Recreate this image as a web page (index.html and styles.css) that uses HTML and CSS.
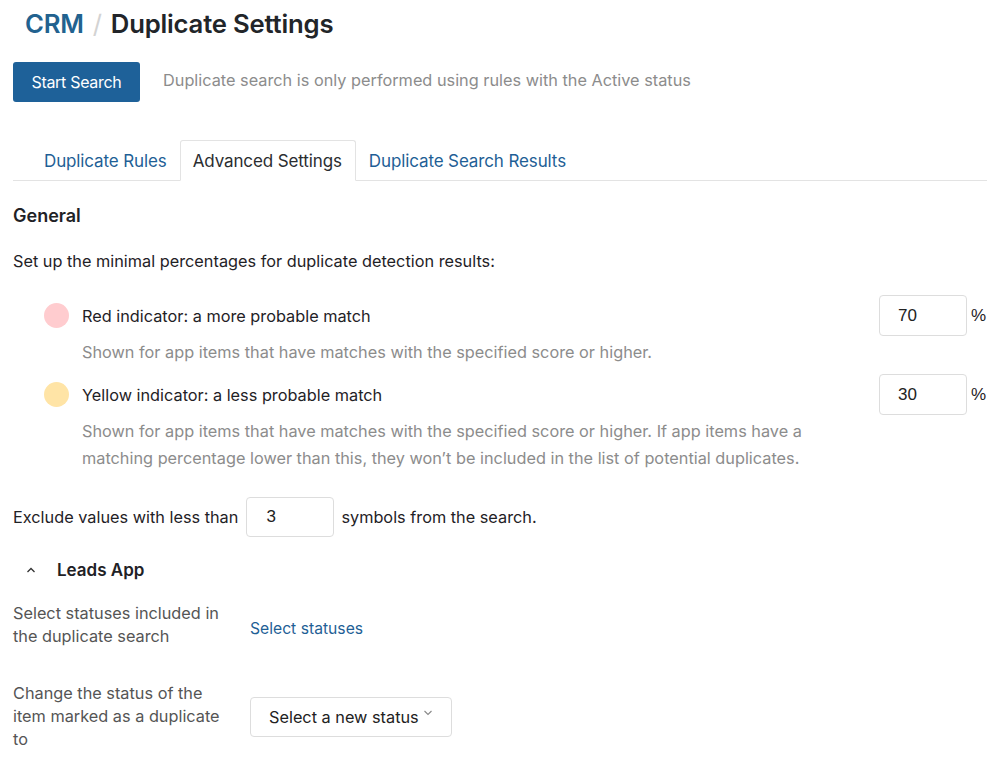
FILE: index.html
```html
<!DOCTYPE html>
<html>
<head>
<meta charset="utf-8">
<link rel="stylesheet" href="styles.css">
</head>
<body>
<div class="page">
  <h1 class="title"><span class="crumb">CRM</span><span class="sep">/</span><span>Duplicate Settings</span></h1>
  <div class="toolbar">
    <button class="btn-primary">Start Search</button>
    <span class="hint">Duplicate search is only performed using rules with the Active status</span>
  </div>
  <div class="tabs">
    <div class="tab">Duplicate Rules</div>
    <div class="tab active">Advanced Settings</div>
    <div class="tab">Duplicate Search Results</div>
  </div>
  <h2 class="section">General</h2>
  <p class="intro">Set up the minimal percentages for duplicate detection results:</p>
  <div class="indicator">
    <div class="ind-head">
      <span class="dot red"></span>
      <span class="ind-title">Red indicator: a more probable match</span>
      <span class="pct"><span class="box">70</span><span class="unit">%</span></span>
    </div>
    <p class="ind-desc">Shown for app items that have matches with the specified score or higher.</p>
  </div>
  <div class="indicator">
    <div class="ind-head">
      <span class="dot yellow"></span>
      <span class="ind-title">Yellow indicator: a less probable match</span>
      <span class="pct"><span class="box">30</span><span class="unit">%</span></span>
    </div>
    <p class="ind-desc">Shown for app items that have matches with the specified score or higher. If app items have a matching percentage lower than this, they won’t be included in the list of potential duplicates.</p>
  </div>
  <div class="exclude">
    <span>Exclude values with less than</span>
    <span class="box small">3</span>
    <span>symbols from the search.</span>
  </div>
  <div class="app-head">
    <svg class="chev" width="10" height="6" viewBox="0 0 10 6"><path d="M1.5 5 L5 1.5 L8.5 5" fill="none" stroke="#333" stroke-width="1.3"/></svg>
    <span>Leads App</span>
  </div>
  <div class="field first">
    <div class="label">Select statuses included in the duplicate search</div>
    <div class="value"><a class="link">Select statuses</a></div>
  </div>
  <div class="field second">
    <div class="label">Change the status of the item marked as a duplicate to</div>
    <div class="value">
      <div class="select"><span>Select a new status</span>
        <svg width="10" height="6" viewBox="0 0 10 6"><path d="M1.5 1 L5 4.5 L8.5 1" fill="none" stroke="#888" stroke-width="1.1"/></svg>
      </div>
    </div>
  </div>
</div>
</body>
</html>
```

FILE: styles.css
```css
* { box-sizing: border-box; }
html, body { margin: 0; padding: 0; background: #fff; }
body { font-family: Inter, "Noto Sans", sans-serif; color: #1f2226; font-size: 16.3px; }
.page { padding: 0 16px 0 13px; width: 1003px; }
.title { margin: 0; padding: 7px 0 0 12px; height: 50px; font-size: 25.7px; font-weight: 600; line-height: 34px; display: flex; letter-spacing: -0.2px; color: #222529; }
.crumb { color: #22628f; }
.sep { color: #d3d3d3; font-weight: 400; margin: 0 9px; }
.toolbar { display: flex; align-items: center; gap: 23px; margin-top: 12px; }
.btn-primary { background: #1e6199; color: #fff; border: 0; border-radius: 3px; width: 127px; height: 40px; font-family: Inter, sans-serif; font-size: 16px; letter-spacing: -0.3px; padding: 0; }
.hint { color: #8c8c8c; position: relative; top: -2px; }
.tabs { display: flex; margin-top: 38px; border-bottom: 1px solid #e3e3e3; padding-left: 18px; height: 41px; }
.tab { height: 41px; padding: 0 13px; display: flex; align-items: center; color: #1f5f96; font-size: 17px; letter-spacing: -0.12px; }
.tab.active { color: #2b2d30; border: 1px solid #e3e3e3; border-bottom: 1px solid #fff; border-radius: 3px 3px 0 0; height: 41px; margin-bottom: -1px; padding: 0 13px 0 12px; }
.section { margin: 23px 0 0; font-size: 18px; font-weight: 600; line-height: 24px; }
.intro { margin: 21px 0 0; line-height: 24px; }
.indicator { margin-top: 22px; padding-left: 31px; }
.indicator + .indicator { margin-top: 8px; }
.ind-head { display: flex; align-items: center; height: 41px; }
.dot { width: 25px; height: 25px; border-radius: 50%; flex: none; margin-right: 13px; }
.dot.red { background: #ffcccf; }
.dot.yellow { background: #ffe4a6; }
.ind-title { flex: 1; }
.pct { display: flex; align-items: center; gap: 4px; }
.box { display: inline-flex; align-items: center; width: 88px; height: 41px; border: 1px solid #ddd; border-radius: 4px; padding-left: 18px; font-family: "Liberation Sans", Arial, sans-serif; font-size: 17px; color: #222; }
.unit { width: 16px; font-family: "Liberation Sans", Arial, sans-serif; font-size: 17px; }
.ind-desc { margin: 3px 0 0 38px; color: #8c8c8c; line-height: 27px; width: 790px; }
.exclude { display: flex; align-items: center; gap: 7px; margin-top: 25px; }
.box.small { width: 88px; height: 40px; padding-left: 19px; margin-left: 1px; }
.app-head { display: flex; align-items: center; margin-top: 18px; height: 30px; font-size: 17px; font-weight: 600; }
.chev { margin: 0 21px 0 13px; }
.field { display: flex; align-items: center; }
.label { width: 237px; color: #555; line-height: 23px; padding-right: 18px; }
.field.first { margin-top: 17px; }
.field.first .value { position: relative; top: 3px; }
.field.second { margin-top: 34px; }
.link { color: #1f5f96; font-size: 15.7px; }
.select { width: 202px; height: 40px; border: 1px solid #ddd; border-radius: 4px; display: flex; align-items: center; justify-content: space-between; padding: 0 18px 0 18px; color: #222; }
.select svg { position: relative; top: -4px; }
```
